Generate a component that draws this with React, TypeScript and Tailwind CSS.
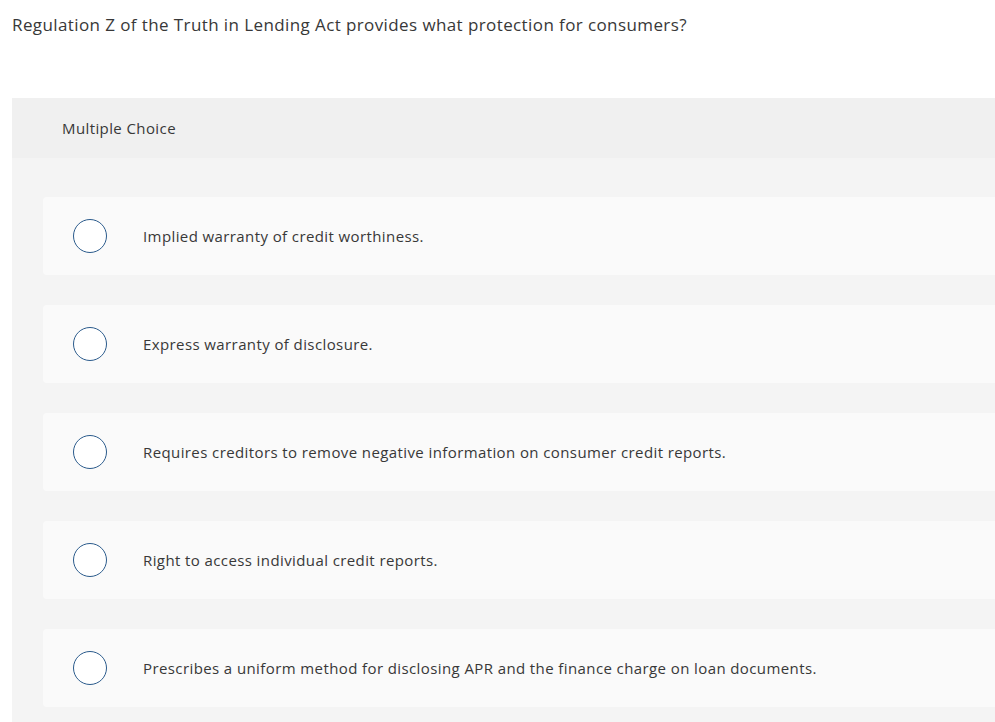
const options = [
  "Implied warranty of credit worthiness.",
  "Express warranty of disclosure.",
  "Requires creditors to remove negative information on consumer credit reports.",
  "Right to access individual credit reports.",
  "Prescribes a uniform method for disclosing APR and the finance charge on loan documents.",
];

const App = () => {
  return (
    <div className="min-h-screen bg-white font-['Open_Sans',sans-serif] tracking-[0.4px] text-[#383838]">
      <p className="px-3 pt-[13px] text-[17px] leading-6">
        Regulation Z of the Truth in Lending Act provides what protection for consumers?
      </p>
      <div className="ml-3 mt-[61px] bg-[#f4f4f4] pb-6">
        <div className="flex h-[60px] items-center bg-[#f0f0f0] pl-[50px] text-[15px]">
          Multiple Choice
        </div>
        <div className="flex flex-col gap-[30px] pl-[31px] pt-[39px]">
          {options.map((opt) => (
            <label
              key={opt}
              className="flex h-[78px] cursor-pointer items-center rounded-l-[4px] bg-[#fafafa] pl-[30px]"
            >
              <span className="h-[34px] w-[34px] shrink-0 rounded-full border border-[#2b5b8c] bg-white" />
              <span className="ml-9 text-[15px]">{opt}</span>
            </label>
          ))}
        </div>
      </div>
    </div>
  );
};

export default App;
